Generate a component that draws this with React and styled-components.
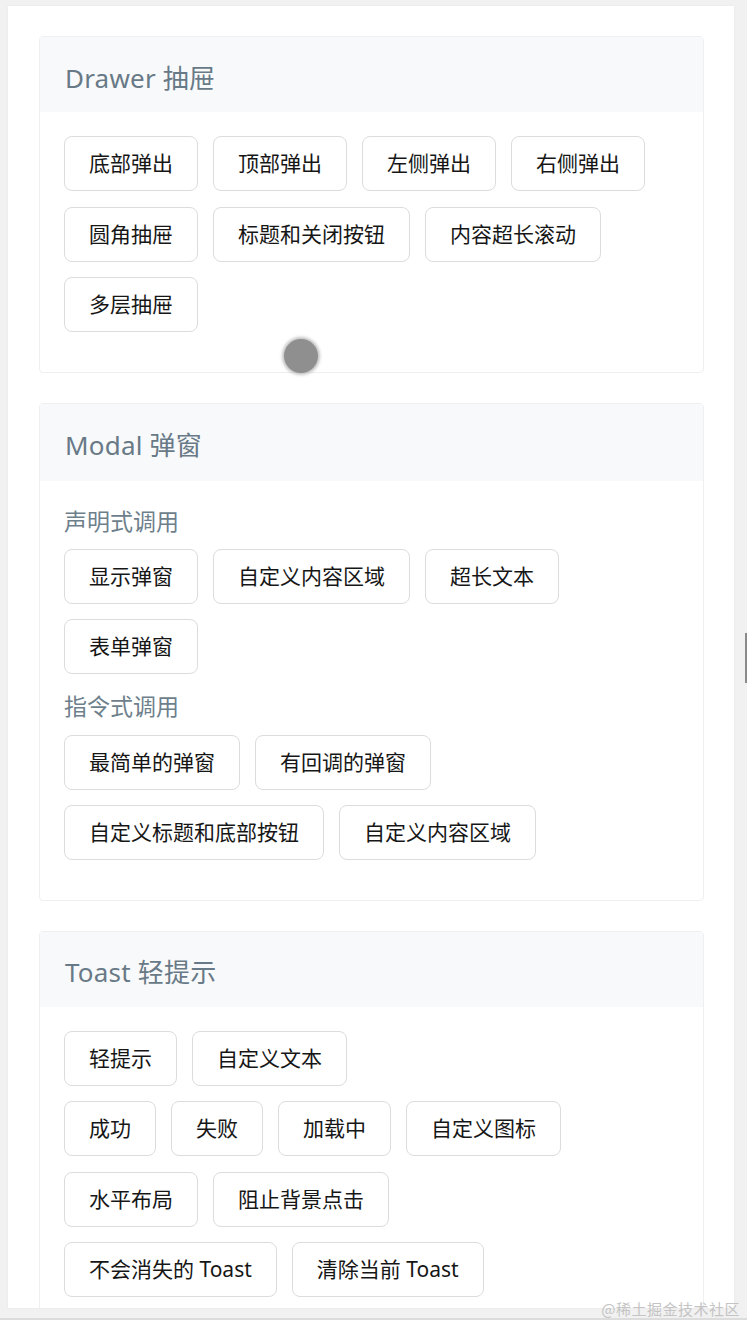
import React from "react";
import styled, { createGlobalStyle } from "styled-components";

const Global = createGlobalStyle`
  html, body { margin: 0; padding: 0; background: #f1f1f1; }
  body { font-family: "Noto Sans", "Noto Sans CJK SC", sans-serif; overflow: hidden; }
`;

const Page = styled.div`
  height: 1320px;
  padding: 6px 13px 0 8px;
  box-sizing: border-box;
  position: relative;
`;

const Panel = styled.div`
  background: #fff;
  height: 1302px;
  overflow: hidden;
  padding: 30px 30px 0 31px;
  box-sizing: border-box;
  box-shadow: 0 0 2px rgba(0, 0, 0, 0.06);
  display: flex;
  flex-direction: column;
  gap: 30px;
`;

const Card = styled.section`
  border: 1px solid #efefef;
  border-radius: 4px;
  background: #fff;
  position: relative;
  flex-shrink: 0;
`;

const CardHeader = styled.header`
  background: #f8f9fa;
  height: ${(p) => p.$h || 75}px;
  box-sizing: border-box;
  padding: 4px 25px 0;
  display: flex;
  align-items: center;
  font-size: 26px;
  color: #687987;
  letter-spacing: 0.2px;
`;

const CardBody = styled.div`
  padding: 24px 24px 24px 24px;
`;

const SubTitle = styled.div`
  font-size: 23px;
  line-height: 32px;
  height: 32px;
  color: #6e7f8c;
  margin: ${(p) => (p.$first ? "0 0 12px" : "1px 0 13px")};
`;

const Group = styled.div`
  display: flex;
  flex-wrap: wrap;
  gap: 15.5px 15px;
  margin-bottom: 15.5px;
`;

const Button = styled.button`
  height: 55px;
  padding: 0 24px;
  border: 1px solid #dcdcdc;
  border-radius: 8px;
  background: #fff;
  color: #161616;
  font-family: "Noto Sans", "Noto Sans CJK SC", sans-serif;
  font-size: 21px;
  line-height: 1;
  cursor: pointer;
`;

const TouchDot = styled.div`
  position: absolute;
  left: 244px;
  top: 302px;
  width: 34px;
  height: 34px;
  border-radius: 50%;
  background: #8f8f8f;
  box-shadow: 0 0 3px 2px rgba(170, 170, 170, 0.7);
  filter: blur(0.6px);
`;

const ScrollThumb = styled.div`
  position: absolute;
  right: 0;
  top: 633px;
  width: 2px;
  height: 50px;
  background: #8a8a8a;
`;

const Watermark = styled.div`
  position: absolute;
  right: 7px;
  bottom: 1px;
  font-size: 15px;
  color: #c4c4c4;
  font-family: "Noto Sans CJK SC", sans-serif;
  letter-spacing: 0.5px;
`;

const BottomLine = styled.div`
  position: absolute;
  left: 0;
  right: 0;
  bottom: 0;
  height: 2px;
  background: #dcdcdc;
`;

const Buttons = ({ items }) => (
  <Group>
    {items.map((t) => (
      <Button key={t}>{t}</Button>
    ))}
  </Group>
);

export default function App() {
  return (
    <Page>
      <Global />
      <Panel>
        <Card>
          <CardHeader>Drawer 抽屉</CardHeader>
          <CardBody>
            <Buttons
              items={[
                "底部弹出",
                "顶部弹出",
                "左侧弹出",
                "右侧弹出",
                "圆角抽屉",
                "标题和关闭按钮",
                "内容超长滚动",
                "多层抽屉",
              ]}
            />
          </CardBody>
          <TouchDot />
        </Card>
        <Card>
          <CardHeader $h={77}>Modal 弹窗</CardHeader>
          <CardBody>
            <SubTitle $first>声明式调用</SubTitle>
            <Buttons items={["显示弹窗", "自定义内容区域", "超长文本", "表单弹窗"]} />
            <SubTitle>指令式调用</SubTitle>
            <Buttons
              items={["最简单的弹窗", "有回调的弹窗", "自定义标题和底部按钮", "自定义内容区域"]}
            />
          </CardBody>
        </Card>
        <Card>
          <CardHeader>Toast 轻提示</CardHeader>
          <CardBody>
            <Buttons items={["轻提示", "自定义文本"]} />
            <Buttons items={["成功", "失败", "加载中", "自定义图标"]} />
            <Buttons items={["水平布局", "阻止背景点击"]} />
            <Buttons items={["不会消失的 Toast", "清除当前 Toast"]} />
          </CardBody>
        </Card>
      </Panel>
      <ScrollThumb />
      <Watermark>@稀土掘金技术社区</Watermark>
      <BottomLine />
    </Page>
  );
}
